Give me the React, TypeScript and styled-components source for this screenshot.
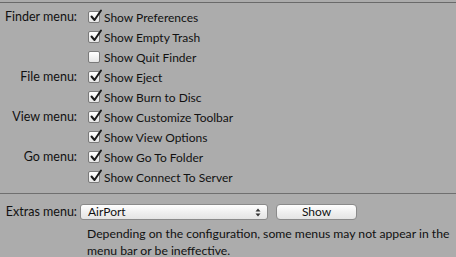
import React from 'react'
import styled, { createGlobalStyle } from 'styled-components'

const GlobalStyle = createGlobalStyle`
  html, body {
    margin: 0;
    padding: 0;
    background: #acacac;
  }
  body {
    font-family: Lato, "Liberation Sans", sans-serif;
    font-size: 12px;
    color: #111;
  }
`

const Panel = styled.div`
  width: 456px;
  height: 257px;
  overflow: hidden;
  background: #acacac;
  border-top: 1px solid #6a6a6a;
  margin-top: 2px;
  box-sizing: border-box;
`

const Grid = styled.div`
  display: grid;
  grid-template-columns: 80px 1fr;
  grid-auto-rows: 20px;
  padding-top: 4px;
`

const Label = styled.div`
  text-align: right;
  padding-right: 3px;
  line-height: 20px;
  white-space: nowrap;
  font-size: 12.5px;
`

const CheckRow = styled.label`
  display: flex;
  align-items: center;
  gap: 4px;
  padding-left: 8px;
  white-space: nowrap;
`

const Box = styled.span<{ $checked: boolean }>`
  position: relative;
  width: 12px;
  height: 12px;
  border: 1px solid #7a7a7a;
  border-radius: 2px;
  background: linear-gradient(#ffffff, #e6e6e6);
  box-sizing: border-box;
  flex: none;
  svg {
    position: absolute;
    left: 0px;
    top: -3px;
    display: ${(p) => (p.$checked ? 'block' : 'none')};
  }
`

const Divider = styled.div`
  border-top: 1px solid #6f6f6f;
  margin-top: 6px;
`

const ExtrasRow = styled.div`
  display: grid;
  grid-template-columns: 80px auto auto 1fr;
  align-items: center;
  padding-top: 8px;
`

const Popup = styled.div`
  width: 188px;
  height: 16px;
  box-sizing: border-box;
  border: 1px solid #8a8a8a;
  border-radius: 3px;
  background: linear-gradient(#ffffff, #f0f0f0 50%, #e4e4e4);
  display: flex;
  align-items: center;
  justify-content: space-between;
  padding: 0 6px 0 7px;
  line-height: 14px;
`

const Button = styled.div`
  margin-left: 8px;
  width: 81px;
  height: 16px;
  box-sizing: border-box;
  border: 1px solid #8a8a8a;
  border-radius: 4px;
  background: linear-gradient(#ffffff, #f0f0f0 50%, #e4e4e4);
  text-align: center;
  line-height: 14px;
`

const Note = styled.p`
  margin: 3px 0 0 87px;
  line-height: 17px;
  width: 369px;
  font-size: 12.2px;
`

const Check = () => (
  <svg width="14" height="14" viewBox="0 0 14 14">
    <path d="M2.5 7.5 L5.5 11 L12 1.5" fill="none" stroke="#1a1a1a" strokeWidth="2" strokeLinecap="round" strokeLinejoin="round" />
  </svg>
)

const Arrows = () => (
  <svg width="6" height="9" viewBox="0 0 6 9">
    <path d="M3 0.5 L5.5 3.5 H0.5 Z M3 8.5 L5.5 5.5 H0.5 Z" fill="#333" />
  </svg>
)

const rows: { label?: string; text: string; checked: boolean }[] = [
  { label: 'Finder menu:', text: 'Show Preferences', checked: true },
  { text: 'Show Empty Trash', checked: true },
  { text: 'Show Quit Finder', checked: false },
  { label: 'File menu:', text: 'Show Eject', checked: true },
  { text: 'Show Burn to Disc', checked: true },
  { label: 'View menu:', text: 'Show Customize Toolbar', checked: true },
  { text: 'Show View Options', checked: true },
  { label: 'Go menu:', text: 'Show Go To Folder', checked: true },
  { text: 'Show Connect To Server', checked: true }
]

export default function App() {
  return (
    <>
      <GlobalStyle />
      <Panel>
        <Grid>
          {rows.map((r) => (
            <React.Fragment key={r.text}>
              <Label>{r.label ?? ''}</Label>
              <CheckRow>
                <Box $checked={r.checked}>
                  <Check />
                </Box>
                {r.text}
              </CheckRow>
            </React.Fragment>
          ))}
        </Grid>
        <Divider />
        <ExtrasRow>
          <Label>Extras menu:</Label>
          <Popup>
            AirPort
            <Arrows />
          </Popup>
          <Button>Show</Button>
        </ExtrasRow>
        <Note>Depending on the configuration, some menus may not appear in the menu bar or be ineffective.</Note>
      </Panel>
    </>
  )
}
